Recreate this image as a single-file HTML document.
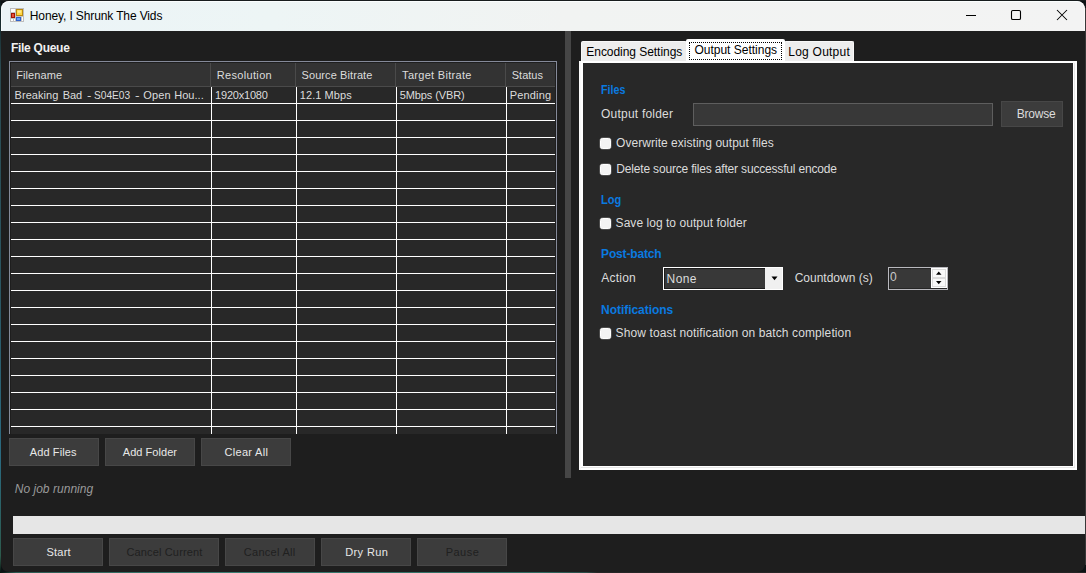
<!DOCTYPE html>
<html><head><meta charset="utf-8"><title>Honey, I Shrunk The Vids</title>
<style>
html,body{margin:0;padding:0;}
body{width:1086px;height:573px;overflow:hidden;position:relative;background:#0c1214;font-family:"Liberation Sans",sans-serif;}
#edgeL{position:absolute;left:0;top:0;width:1px;height:573px;background:linear-gradient(#0d1a1c 0,#2a4a50 12%,#2a5560 50%,#2a6a80 80%,#2d5a4c 97%,#08140f 100%);}
#edgeB{position:absolute;left:0;top:572px;width:1086px;height:1px;background:linear-gradient(90deg,#06120e 0,#2d5a52 1.5%,#3a7d72 20%,#2f6a60 50%,#2a4a46 54%,#262626 55%,#242424 100%);}
#edgeT{position:absolute;left:0;top:0;width:1086px;height:1px;background:#171c1d;}
#edgeR{position:absolute;left:1085px;top:8px;width:1px;height:557px;background:#383838;}
#win{position:absolute;left:1px;top:1px;width:1084px;height:571px;background:#1e1e1e;border-radius:8px;overflow:hidden;}
#title{position:absolute;left:0;top:0;width:1084px;height:30px;background:linear-gradient(90deg,#ebf4f7 0,#edf5f5 25%,#f1f3f2 52%,#f3f3f3 100%);}
#root{position:absolute;left:0;top:0;width:1086px;height:573px;}
.t,.tg{position:absolute;white-space:pre;line-height:14px;}
.tw{display:inline-block;white-space:pre;line-height:14px;vertical-align:top;overflow:visible;}
.abs{position:absolute;}
#grid{position:absolute;left:9px;top:61px;width:546px;height:372px;background:#282828;border:1px solid #858a99;border-bottom:none;box-sizing:content-box;overflow:hidden}
#ghead{position:absolute;left:11px;top:63px;width:544px;height:23px;background:#333;}
#gheadline{position:absolute;left:11px;top:86px;width:544px;height:1px;background:#4a4a4a;}
  .hl{position:absolute;left:11px;width:544px;height:1px;background:#fff;}
.vl{position:absolute;top:87px;width:1px;height:347px;background:#fff;}
.hv{position:absolute;top:63px;width:1px;height:23px;background:#4a4a4a;}
.btn{position:absolute;background:#3c3c3c;border:1px solid #474747;box-sizing:border-box;}
.chk{position:absolute;width:11px;height:11px;background:#f3f3f3;border:1px solid #fff;box-sizing:border-box;border-radius:2.5px;box-shadow:0 0 0 0.5px rgba(255,255,255,.35);}
</style></head><body>
<div id="edgeL"></div><div id="edgeB"></div><div id="edgeT"></div><div id="edgeR"></div>
<div id="win"><div id="title"></div><div style="position:absolute;left:0;top:0;width:1084px;height:30px;border-top:1px solid #fbfefe;border-left:1px solid #f6fbfc;border-right:1px solid #fafafa;box-sizing:border-box;border-radius:8px 8px 0 0"></div></div>
<div id="root">
<!-- app icon -->
<svg class="abs" style="left:10px;top:8px" width="14" height="14" viewBox="0 0 14 14">
<rect x="0.5" y="0.5" width="13" height="13" fill="#fdfdfd" stroke="#bdbdbd"/>
<path d="M5.5 0.5V13.5M0.5 4.5H5.5M0.5 10.5H5.5M5.5 8.5H13.5M3.5 10.5V13.5M11.5 8.5V13.5" stroke="#c4c4c4" fill="none"/>
<rect x="6.5" y="1.5" width="6" height="6" fill="#ffd642" stroke="#b98a10"/>
<rect x="7.6" y="2.4" width="3.6" height="2.4" fill="#ffeea0" opacity=".8"/>
<rect x="1.5" y="5.5" width="3" height="4" fill="#e8503c" stroke="#a31505"/>
<rect x="6.5" y="9.5" width="4" height="3" fill="#6aa2f6" stroke="#2f62cc"/>
</svg>
<!-- caption buttons -->
<svg class="abs" style="left:960px;top:5px" width="120" height="22" viewBox="0 0 120 22">
<path d="M6 10.5H16" stroke="#000" stroke-width="1" fill="none"/>
<rect x="51.5" y="5.5" width="9" height="9" rx="1.3" fill="none" stroke="#000" stroke-width="1.1"/>
<path d="M97 5L107 15M107 5L97 15" stroke="#000" stroke-width="1.05" fill="none"/>
</svg>
<!-- splitter -->
<div class="abs" style="left:565px;top:31px;width:6px;height:447px;background:#464646"></div>
<!-- grid -->
<div id="grid"></div>
<div id="ghead"></div><div id="gheadline"></div>
<div class="hv" style="left:210px"></div><div class="hv" style="left:295px"></div><div class="hv" style="left:395px"></div><div class="hv" style="left:505px"></div>
<div class="vl" style="left:211px"></div><div class="vl" style="left:296px"></div><div class="vl" style="left:396px"></div><div class="vl" style="left:506px"></div>
<div class="hl" style="top:103px"></div><div class="hl" style="top:120px"></div><div class="hl" style="top:137px"></div><div class="hl" style="top:154px"></div><div class="hl" style="top:171px"></div><div class="hl" style="top:188px"></div><div class="hl" style="top:205px"></div><div class="hl" style="top:222px"></div><div class="hl" style="top:239px"></div><div class="hl" style="top:256px"></div><div class="hl" style="top:273px"></div><div class="hl" style="top:290px"></div><div class="hl" style="top:307px"></div><div class="hl" style="top:324px"></div><div class="hl" style="top:341px"></div><div class="hl" style="top:358px"></div><div class="hl" style="top:375px"></div><div class="hl" style="top:392px"></div><div class="hl" style="top:409px"></div><div class="hl" style="top:426px"></div>
<div class="abs" style="left:10px;top:62px;width:546px;height:372px;border:1px solid #1e1e1e;border-bottom:none;box-sizing:border-box"></div>
<!-- left buttons -->
<div class="btn" style="left:9px;top:438px;width:90px;height:28px"></div><div class="btn" style="left:105px;top:438px;width:90px;height:28px"></div><div class="btn" style="left:201px;top:438px;width:90px;height:28px"></div>
<!-- progress -->
<div class="abs" style="left:13px;top:516px;width:1072px;height:18px;background:#e6e6e6"></div>
<div class="btn" style="left:13px;top:538px;width:90px;height:28px"></div><div class="btn" style="left:109px;top:538px;width:110px;height:28px"></div><div class="btn" style="left:225px;top:538px;width:90px;height:28px"></div><div class="btn" style="left:321px;top:538px;width:90px;height:28px"></div><div class="btn" style="left:417px;top:538px;width:90px;height:28px"></div>
<!-- tabs -->
<div class="abs" style="left:579px;top:61px;width:498px;height:409px;background:#fff"></div>
<div class="abs" style="left:579px;top:61px;width:2px;height:409px;background:#f9f9f9"></div>
<div class="abs" style="left:1074px;top:63px;width:1px;height:405px;background:#e6e6e6"></div>
<div class="abs" style="left:581px;top:467px;width:494px;height:1px;background:#e6e6e6"></div>
<div class="abs" style="left:583px;top:63px;width:490px;height:403px;background:#282828"></div>
<div class="abs" style="left:581px;top:41px;width:106px;height:20px;background:#ededed;border:1px solid #f8f8f8;border-bottom:none;box-sizing:border-box;border-radius:2px 2px 0 0"></div>
<div class="abs" style="left:784px;top:41px;width:70px;height:20px;background:#ededed;border:1px solid #f8f8f8;border-bottom:none;box-sizing:border-box;border-radius:2px 2px 0 0"></div>
<div class="abs" style="left:686px;top:39px;width:99px;height:23px;background:#fff;border-radius:2px 2px 0 0"></div>
<div class="abs" style="left:689px;top:42px;width:93px;height:18px;border:1px dotted #000;box-sizing:border-box"></div>
<!-- output folder -->
<div class="abs" style="left:693px;top:103px;width:300px;height:23px;background:#383838;border:1px solid #5e5e5e;box-sizing:border-box"></div>
<div class="btn" style="left:1001px;top:101px;width:62px;height:26px"></div>
<div class="chk" style="left:600px;top:138px"></div><div class="chk" style="left:600px;top:164px"></div><div class="chk" style="left:600px;top:218px"></div><div class="chk" style="left:600px;top:328px"></div>
<!-- combo -->
<div class="abs" style="left:663px;top:267px;width:120px;height:23px;background:#383838;border:1px solid #fff;box-sizing:border-box"></div>
<div class="abs" style="left:664px;top:268px;width:118px;height:21px;border:1px solid #1c1c1c;box-sizing:border-box"></div>
<div class="abs" style="left:765px;top:268px;width:17px;height:21px;background:#f0f0f0"></div>
<svg class="abs" style="left:771px;top:276px" width="8" height="5" viewBox="0 0 8 5"><path d="M0.5 0.5H6.5L3.5 4.2Z" fill="#000"/></svg>
<!-- numeric -->
<div class="abs" style="left:888px;top:267px;width:60px;height:23px;background:#383838;border:1px solid #b9b9be;box-sizing:border-box"></div>
<div class="abs" style="left:889px;top:268px;width:58px;height:21px;border:1px solid #262626;box-sizing:border-box"></div>
<div class="abs" style="left:931px;top:268px;width:16px;height:20px;background:#fff"></div>
<div class="abs" style="left:932px;top:269px;width:14px;height:9px;background:#f9f9f9;border:1px solid #dcdcdc;box-sizing:border-box"></div>
<div class="abs" style="left:932px;top:278px;width:14px;height:9px;background:#f9f9f9;border:1px solid #dcdcdc;box-sizing:border-box"></div>
<svg class="abs" style="left:935px;top:271px" width="8" height="14" viewBox="0 0 8 14"><path d="M1 3.8L3.75 0.6L6.5 3.8Z" fill="#000"/><path d="M1 10L6.5 10L3.75 13.2Z" fill="#000"/></svg>
<span class="t" style="left:29.8px;top:9px;font-size:12px;color:#000;letter-spacing:-0.121px;">Honey, I Shrunk The Vids</span>
<span class="t" style="left:10.9px;top:41px;font-size:12px;font-weight:bold;color:#f0f0f0;letter-spacing:-0.264px;">File Queue</span>
<span class="t" style="left:16.2px;top:68px;font-size:11px;color:#dcdcdc;letter-spacing:0.103px;">Filename</span>
<span class="t" style="left:216.7px;top:68px;font-size:11px;color:#dcdcdc;letter-spacing:0.340px;">Resolution</span>
<span class="t" style="left:301.5px;top:68px;font-size:11px;color:#dcdcdc;letter-spacing:0.089px;">Source Bitrate</span>
<span class="t" style="left:402.1px;top:68px;font-size:11px;color:#dcdcdc;letter-spacing:0.301px;">Target Bitrate</span>
<span class="t" style="left:511.7px;top:68px;font-size:11px;color:#dcdcdc;letter-spacing:0.025px;">Status</span>
<span class="tg" style="left:14.5px;top:88px;font-size:11px;color:#dcdcdc;"><span class="tw" style="width:48.31px;letter-spacing:0.064px;">Breaking </span><span class="tw" style="width:24.20px;letter-spacing:-0.154px;">Bad </span><span class="tw" style="width:7.06px;transform:scaleX(1.193);transform-origin:0 0;">- </span><span class="tw" style="width:40.80px;transform:scaleX(0.923);transform-origin:0 0;">S04E03 </span><span class="tw" style="width:8.36px;transform:scaleX(1.242);transform-origin:0 0;">- </span><span class="tw" style="width:31.00px;letter-spacing:0.169px;">Open </span><span class="tw" style="width:32.74px;letter-spacing:0.044px;">Hou...</span></span>
<span class="t" style="left:215.1px;top:88px;font-size:11px;color:#dcdcdc;letter-spacing:-0.209px;">1920x1080</span>
<span class="t" style="left:299.8px;top:88px;font-size:11px;color:#dcdcdc;letter-spacing:0.068px;">12.1 Mbps</span>
<span class="t" style="left:399.8px;top:88px;font-size:11px;color:#dcdcdc;letter-spacing:-0.115px;">5Mbps (VBR)</span>
<span class="t" style="left:509.7px;top:88px;font-size:11px;color:#dcdcdc;letter-spacing:0.181px;">Pending</span>
<span class="t" style="left:586.3px;top:45px;font-size:12px;color:#000;letter-spacing:-0.048px;">Encoding Settings</span>
<span class="t" style="left:694.4px;top:43px;font-size:12px;color:#000;letter-spacing:0.001px;">Output Settings</span>
<span class="t" style="left:788.3px;top:45px;font-size:12px;color:#000;letter-spacing:0.228px;">Log Output</span>
<span class="t" style="left:600.9px;top:83px;font-size:12px;font-weight:bold;color:#0a7ae0;transform:scaleX(0.889);transform-origin:0 0;">Files</span>
<span class="t" style="left:601.0px;top:107px;font-size:12px;color:#dcdcdc;letter-spacing:0.217px;">Output folder</span>
<span class="t" style="left:616.1px;top:136px;font-size:12px;color:#dcdcdc;letter-spacing:0.031px;">Overwrite existing output files</span>
<span class="t" style="left:616.3px;top:162px;font-size:12px;color:#dcdcdc;letter-spacing:-0.178px;">Delete source files after successful encode</span>
<span class="t" style="left:600.9px;top:193px;font-size:12px;font-weight:bold;color:#0a7ae0;transform:scaleX(0.920);transform-origin:0 0;">Log</span>
<span class="t" style="left:615.6px;top:216px;font-size:12px;color:#dcdcdc;letter-spacing:0.040px;">Save log to output folder</span>
<span class="t" style="left:601.1px;top:247px;font-size:12px;font-weight:bold;color:#0a7ae0;letter-spacing:-0.168px;">Post-batch</span>
<span class="t" style="left:601.3px;top:271px;font-size:12px;color:#dcdcdc;letter-spacing:0.220px;">Action</span>
<span class="t" style="left:666.6px;top:272px;font-size:12px;color:#dcdcdc;letter-spacing:0.418px;">None</span>
<span class="t" style="left:794.7px;top:271px;font-size:12px;color:#dcdcdc;letter-spacing:-0.007px;">Countdown (s)</span>
<span class="t" style="left:890.0px;top:270px;font-size:12px;color:#c8c8c8;transform:scaleX(1.003);transform-origin:0 0;">0</span>
<span class="t" style="left:601.1px;top:303px;font-size:12px;font-weight:bold;color:#0a7ae0;letter-spacing:-0.044px;">Notifications</span>
<span class="t" style="left:615.6px;top:326px;font-size:12px;color:#dcdcdc;letter-spacing:0.111px;">Show toast notification on batch completion</span>
<span class="t" style="left:1016.7px;top:107px;font-size:12px;color:#dcdcdc;letter-spacing:-0.219px;">Browse</span>
<span class="t" style="left:29.7px;top:445px;font-size:11px;color:#e8e8e8;letter-spacing:0.124px;">Add Files</span>
<span class="t" style="left:122.8px;top:445px;font-size:11px;color:#e8e8e8;letter-spacing:0.039px;">Add Folder</span>
<span class="t" style="left:224.5px;top:445px;font-size:11px;color:#e8e8e8;letter-spacing:0.311px;">Clear All</span>
<span class="t" style="left:14.7px;top:482px;font-size:12px;font-style:italic;color:#9a9a9a;letter-spacing:0.034px;">No job running</span>
<span class="t" style="left:46.5px;top:545px;font-size:11px;color:#e8e8e8;letter-spacing:0.206px;">Start</span>
<span class="t" style="left:126.5px;top:545px;font-size:11px;color:#202020;letter-spacing:0.141px;">Cancel Current</span>
<span class="t" style="left:243.8px;top:545px;font-size:11px;color:#202020;letter-spacing:0.274px;">Cancel All</span>
<span class="t" style="left:345.2px;top:545px;font-size:11px;color:#e8e8e8;letter-spacing:0.409px;">Dry Run</span>
<span class="t" style="left:445.7px;top:545px;font-size:11px;color:#202020;letter-spacing:0.472px;">Pause</span>
</div>
</body></html>
